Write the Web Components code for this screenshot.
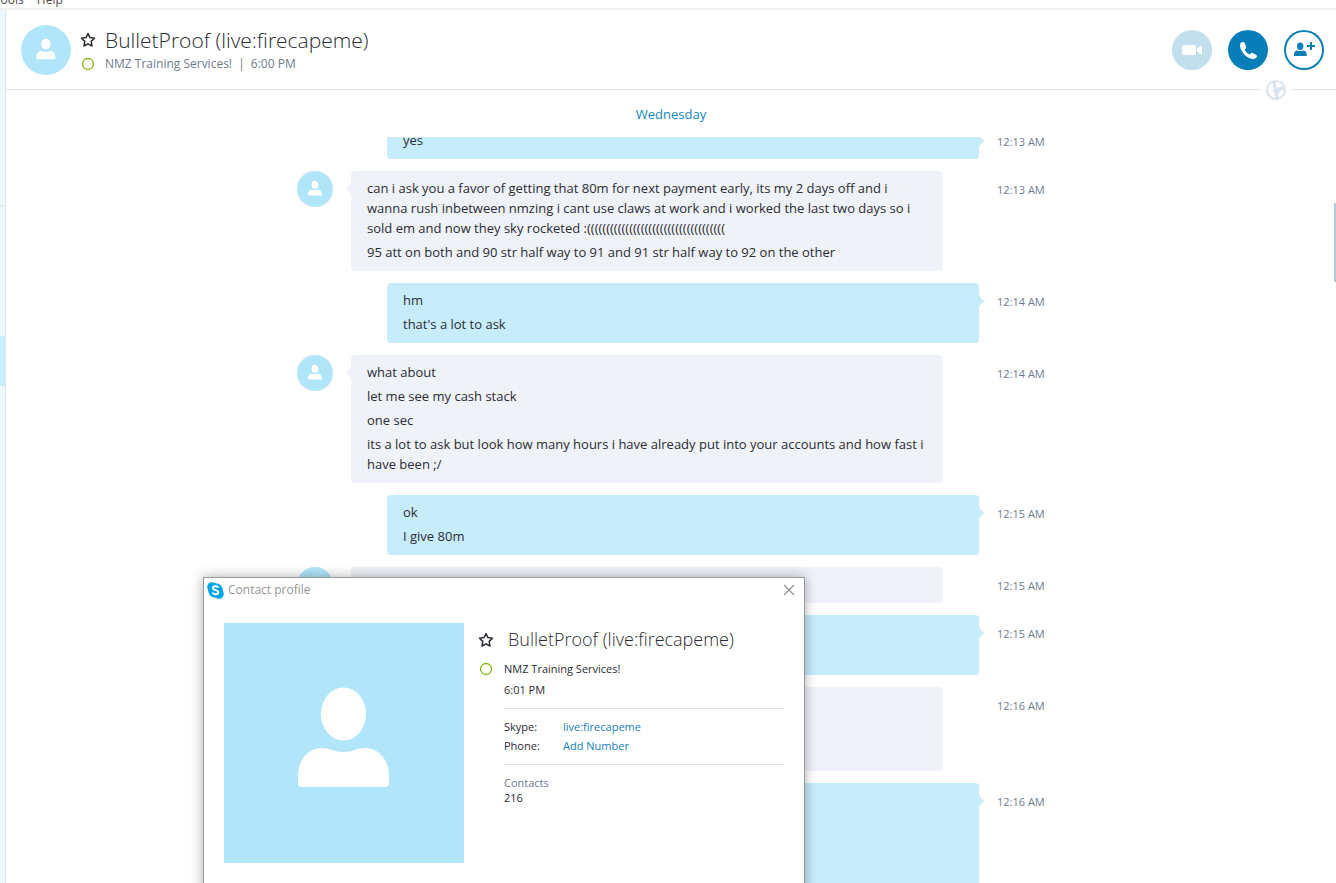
<!DOCTYPE html>
<html lang="en">
<head>
<meta charset="utf-8">
<title>Skype</title>
<style>
  :root {
    --sky: #b1e6fa;
    --sky-soft: #c7ecfc;
    --grey-soft: #eff2f8;
    --line: #dae7f1;
    --brand: #087eb8;
    --text: #2b2c33;
    --muted: #6e7b8c;
    --online: #84bb13;
  }
  body {
    margin: 0;
    height: 100vh;
    overflow: hidden;
    position: relative;
    display: flex;
    flex-direction: column;
    background: #fff;
    color: var(--text);
    font: 13px/20px "Open Sans", "Noto Sans", sans-serif;
  }
  .window { flex: 1; min-height: 0; display: flex; }
  main { flex: 1; min-width: 0; display: flex; flex-direction: column; }
</style>
</head>
<body>
<menu-strip>
  <button>Tools</button>
  <button>Help</button>
</menu-strip>
<div class="window">
  <recent-strip></recent-strip>
  <main>
    <chat-header name="BulletProof (live:firecapeme)" mood="NMZ Training Services!" time="6:00 PM"></chat-header>
    <chat-log day="Wednesday">
      <chat-message time="12:13 AM" mine><p>yes</p></chat-message>
      <chat-message time="12:13 AM">
        <p>can i ask you a favor of getting that 80m for next payment early, its my 2 days off and i wanna rush inbetween nmzing i cant use claws at work and i worked the last two days so i sold em and now they sky rocketed :((((((((((((((((((((((((((((((((((((</p>
        <p>95 att on both and 90 str half way to 91 and 91 str half way to 92 on the other</p>
      </chat-message>
      <chat-message time="12:14 AM" mine><p>hm</p><p>that's a lot to ask</p></chat-message>
      <chat-message time="12:14 AM">
        <p>what about</p>
        <p>let me see my cash stack</p>
        <p>one sec</p>
        <p>its a lot to ask but look how many hours i have already put into your accounts and how fast i have been ;/</p>
      </chat-message>
      <chat-message time="12:15 AM" mine><p>ok</p><p>I give 80m</p></chat-message>
      <chat-message time="12:15 AM"><p></p></chat-message>
      <chat-message time="12:15 AM" mine><p></p><p></p></chat-message>
      <chat-message time="12:16 AM"><p></p><p></p><p></p></chat-message>
      <chat-message time="12:16 AM" mine><p></p><p></p><p></p><p></p><p></p></chat-message>
    </chat-log>
  </main>
</div>
<contact-dialog heading="Contact profile">
  <span slot="name">BulletProof (live:firecapeme)</span>
  <span slot="mood">NMZ Training Services!</span>
  <span slot="time">6:01 PM</span>
  <span slot="contacts">216</span>
</contact-dialog>

<script>
const STAR = `<svg width="16" height="16" viewBox="0 0 16 16" fill="none" stroke="currentColor" stroke-width="1.5" stroke-linejoin="round">
  <path d="M8 1.500l1.900 4.100 4.600.6-3.300 3.200.8 4.600L8 11.800l-4 2.200.8-4.600-3.300-3.200 4.600-.6z"/></svg>`;

const STATUS = `<svg width="14" height="14" viewBox="0 0 14 14" fill="none" stroke="var(--online)" stroke-width="1.3">
  <circle cx="7" cy="7" r="5.5"/></svg>`;

const ICONS = {
  video: `<rect x="10" y="15" width="14" height="10" rx="2"/><path d="M25 18.500l4-2.800q1-.5 1 .5v7.600q0 1-1 .5l-4-2.800z"/>`,
  phone: `<path d="M15.3 12.1c-1.600-.3-3.200 1-3.300 2.900C12.200 22.300 19.300 28.900 25.600 29c1.900 0 3.400-1.400 3.300-3 0-.7-.2-1-.9-1.300l-3.400-1.600c-.8-.4-1.300-.3-1.900.3l-1.200 1.200c-2.200-1-4-2.900-4.900-5l1.100-1.200c.6-.6.7-1.100.4-1.900l-1.500-3.500c-.2-.6-.6-.8-1.300-.9z"/>`,
  add: `<ellipse cx="16.200" cy="16.300" rx="3.200" ry="3.700"/><path d="M10 26v-1.500c0-2.500 1.500-4 3.500-4q2.800 1 5.700 0c2 0 3.500 1.500 3.500 4V26z"/><path d="M26 12h2v3h3v2h-3v3h-2v-3h-3v-2h3z"/>`,
};

/** Base class: opens the shadow root and fills it with the subclass's render(). */
class SkElement extends HTMLElement {
  connectedCallback() {
    if (this.shadowRoot) return;
    this.attachShadow({ mode: 'open' }).innerHTML = this.render();
    this.ready();
  }
  ready() {}
}

/** <menu-strip> — application menu, tucked under the top edge of the window. */
class MenuStrip extends SkElement {
  render() {
    return `
      <style>
        :host {
          display: flex;
          align-items: flex-end;
          gap: 13px;
          height: 8px;
          flex: none;
          overflow: hidden;
          margin-left: -6px;
          border-bottom: 2px solid #f0f0f0;
        }
        ::slotted(button) {
          border: 0;
          padding: 0;
          background: none;
          color: #4b4b4b;
          font: 12px/16px "Open Sans", sans-serif;
        }
      </style>
      <slot></slot>`;
  }
}

/** <recent-strip> — visible edge of the conversation list. */
class RecentStrip extends SkElement {
  render() {
    return `
      <style>
        :host { flex: none; width: 5px; background: #f0f8ff; border-right: 1px solid var(--line); }
        .tabs { height: 195px; border-bottom: 1px solid var(--line); }
        .current { margin-top: 130px; height: 50px; background: var(--sky-soft); }
      </style>
      <div class="tabs"></div>
      <div class="current"></div>`;
  }
}

/** <user-avatar> — round or square placeholder picture, sized by its user. */
class UserAvatar extends SkElement {
  render() {
    return `
      <style>
        :host { display: block; background: var(--sky); border-radius: 50%; overflow: hidden; }
        :host([square]) { border-radius: 0; }
        svg { display: block; width: 100%; }
      </style>
      <svg viewBox="0 0 240 240" fill="#fff">
        <ellipse cx="119.500" cy="91" rx="22.500" ry="26.500"/>
        <path d="M78 164q-4 0-4-4v-7c0-16 10-28 24-28 8 0 12 4 21.500 4s13.500-4 21.500-4c14 0 24 12 24 28v7q0 4-4 4z"/>
      </svg>`;
  }
}

/** <round-button icon label> — call controls in the header. */
class RoundButton extends SkElement {
  render() {
    return `
      <style>
        :host { display: block; }
        button {
          display: block;
          box-sizing: border-box;
          width: 40px;
          height: 40px;
          padding: 0;
          border: 0;
          border-radius: 50%;
          background: var(--brand);
          color: #fff;
          cursor: pointer;
        }
        button:disabled { background: #c1dfec; cursor: default; }
        :host([outline]) button { background: #fff; color: var(--brand); box-shadow: inset 0 0 0 2px var(--brand); }
        svg { display: block; }
      </style>
      <button aria-label="${this.getAttribute('label')}" ${this.hasAttribute('off') ? 'disabled' : ''}>
        <svg width="40" height="40" viewBox="0 0 40 40" fill="currentColor">${ICONS[this.getAttribute('icon')]}</svg>
      </button>`;
  }
}

/** <chat-header> — who the conversation is with, and the call controls. */
class ChatHeader extends SkElement {
  render() {
    return `
      <style>
        :host {
          flex: none;
          display: flex;
          align-items: center;
          box-sizing: border-box;
          height: 80px;
          padding: 0 12px 0 15px;
          border-bottom: 1px solid var(--line);
          position: relative;
        }
        user-avatar { width: 50px; margin-right: 9px; }
        .who { flex: 1; display: grid; grid-template-columns: 16px 1fr; column-gap: 9px; align-items: center; }
        .who > svg, .who button { justify-self: center; }
        .who button { border: 0; padding: 0; background: none; color: inherit; display: flex; }
        h1 { margin: 0; font-size: 21px; line-height: 28px; font-weight: 300; }
        p { margin: 0; font-size: 12px; line-height: 20px; color: var(--muted); }
        .bar { margin: 0 3px; }
        .calls { display: flex; gap: 16px; }
        .globe {
          position: absolute;
          right: 45px;
          bottom: -11px;
          padding: 0 5px;
          background: #fff;
          display: flex;
        }
      </style>
      <user-avatar></user-avatar>
      <div class="who">
        <button aria-label="Add to favourites">${STAR}</button>
        <h1>${this.getAttribute('name')}</h1>
        ${STATUS}
        <p>${this.getAttribute('mood')}<span class="bar"> | </span>${this.getAttribute('time')}</p>
      </div>
      <div class="calls">
        <round-button icon="video" label="Video call" off></round-button>
        <round-button icon="phone" label="Call"></round-button>
        <round-button icon="add" label="Add people" outline></round-button>
      </div>
      <div class="globe">
        <svg width="20" height="20" viewBox="0 0 20 20">
          <circle cx="10" cy="10" r="10" fill="#d8e5ef"/>
          <path fill="#fff" d="M2 8.500Q3 4.500 6 3l1.500 1L6.500 6.500 8 8l-1.500 2.500L8.500 13 9 17.500Q6 17.500 4 15 1.800 12.500 2 8.500zM9.500 2Q14 1.500 16.500 5l1 2-2.500-.5-1.500 1L10.500 7l-.5-2zM14.500 10.500l3.500-.5Q18 15 13 17.500l-1-2 1-2z"/>
        </svg>
      </div>`;
  }
}

/** <chat-log day> — scrolling list of messages under the day heading. */
class ChatLog extends SkElement {
  render() {
    return `
      <style>
        :host { flex: 1; min-height: 0; display: flex; flex-direction: column; position: relative; }
        h2 {
          margin: 0;
          padding: 14px 0 13px;
          text-align: center;
          font-size: 13px;
          line-height: 20px;
          font-weight: 400;
          color: #1487bd;
        }
        .scroll { flex: 1; min-height: 0; overflow-y: auto; scrollbar-width: none; }
        .list { display: flex; flex-direction: column; gap: 12px; max-width: 748px; margin: 0 auto; }
        .thumb { position: absolute; right: 0; top: 113px; width: 2px; height: 79px; background: #b3cadd; }
      </style>
      <h2>${this.getAttribute('day')}</h2>
      <div class="scroll"><div class="list"><slot></slot></div></div>
      <div class="thumb"></div>`;
  }
  ready() {
    this.shadowRoot.querySelector('.scroll').scrollTop = 14;
  }
}

/** <chat-message time [mine]> — one bubble; each slotted <p> is a message in it. */
class ChatMessage extends SkElement {
  render() {
    const mine = this.hasAttribute('mine');
    return `
      <style>
        :host { display: grid; grid-template-columns: 36px 1fr 48px; column-gap: 18px; align-items: start; }
        .bubble {
          grid-column: 2;
          margin-right: 36px;
          padding: 7px 16px 9px;
          display: flex;
          flex-direction: column;
          gap: 4px;
          border-radius: 4px;
          background: var(--grey-soft);
          position: relative;
        }
        :host([mine]) .bubble { margin: 0 0 0 36px; background: var(--sky-soft); }
        .tail { position: absolute; top: 11px; right: 100%; color: var(--grey-soft); }
        :host([mine]) .tail { right: auto; left: 100%; color: var(--sky-soft); transform: scaleX(-1); }
        ::slotted(p) { margin: 0; min-height: 20px; }
        time { grid-column: 3; padding-top: 9px; font-size: 11px; line-height: 20px; color: var(--muted); white-space: nowrap; }
      </style>
      ${mine ? '' : '<user-avatar></user-avatar>'}
      <div class="bubble">
        <svg class="tail" width="5" height="14" viewBox="0 0 5 14" fill="currentColor"><path d="M5 0v14Q4.500 10.500.500 8q-1-1 0-2Q4.500 3.500 5 0z"/></svg>
        <slot></slot>
      </div>
      <time>${this.getAttribute('time')}</time>`;
  }
}

/** <contact-dialog heading> — profile window floating over the chat. */
class ContactDialog extends SkElement {
  render() {
    return `
      <style>
        :host {
          position: absolute;
          left: 203px;
          top: 577px;
          box-sizing: border-box;
          width: 602px;
          height: 340px;
          border: 1px solid #969a9c;
          background: #fff;
          box-shadow: 0 0 12px rgba(0, 0, 0, .32);
        }
        button { border: 0; padding: 0; background: none; color: inherit; display: flex; cursor: pointer; }
        a { color: #1481bb; text-decoration: none; }
        .title { display: flex; align-items: center; gap: 4px; padding: 3px 9px 0 3px; font-size: 12px; line-height: 18px; color: #949494; }
        .title span { flex: 1; }
        .body { display: flex; gap: 14px; padding: 24px 20px 0; }
        user-avatar { flex: none; width: 240px; height: 240px; }
        .card {
          flex: 1;
          display: grid;
          grid-template-columns: 16px 1fr;
          column-gap: 10px;
          align-content: start;
          font-size: 11px;
          line-height: 18px;
        }
        .card > svg, .card > button { justify-self: center; align-self: center; }
        h2 { margin: 0; padding: 3px 4px 5px; font-size: 18px; line-height: 26px; font-weight: 300; }
        .mood { padding: 3px 0; }
        .info { grid-column: 2; }
        dl { display: grid; grid-template-columns: 59px 1fr; row-gap: 1px; margin: 9px 0 10px; padding: 9px 0; border: solid var(--line); border-width: 1px 0; }
        dd { margin: 0; }
        .count { line-height: 15px; }
        .count div { color: var(--muted); }
      </style>
      <div class="title">
        <svg width="17" height="17" viewBox="0 0 17 17">
          <circle cx="5" cy="5" r="4.800" fill="#00a5e8"/><circle cx="12" cy="12" r="4.800" fill="#00a5e8"/><circle cx="8.500" cy="8.500" r="7.300" fill="#00a5e8"/>
          <path d="M11.300 5.700C10.800 4.500 9.800 4.200 8.500 4.200c-1.600 0-2.600.7-2.600 1.900 0 2.700 5.400 1.500 5.400 4.200 0 1.300-1.200 2-2.800 2-1.500 0-2.500-.5-3-1.800" fill="none" stroke="#fff" stroke-width="1.900"/>
        </svg>
        <span>${this.getAttribute('heading')}</span>
        <button aria-label="Close">
          <svg width="12" height="12" viewBox="0 0 12 12" stroke="#8d8d8d" stroke-width="1.100"><path d="M1 1l10 10M11 1L1 11"/></svg>
        </button>
      </div>
      <div class="body">
        <user-avatar square></user-avatar>
        <div class="card">
          <button aria-label="Add to favourites">${STAR}</button>
          <h2><slot name="name"></slot></h2>
          ${STATUS}
          <div class="mood"><slot name="mood"></slot></div>
          <div class="info">
            <slot name="time"></slot>
            <dl>
              <dt>Skype:</dt><dd><a href="#">live:firecapeme</a></dd>
              <dt>Phone:</dt><dd><a href="#">Add Number</a></dd>
            </dl>
            <div class="count"><div>Contacts</div><slot name="contacts"></slot></div>
          </div>
        </div>
      </div>`;
  }
}

customElements.define('user-avatar', UserAvatar);
customElements.define('round-button', RoundButton);
customElements.define('menu-strip', MenuStrip);
customElements.define('recent-strip', RecentStrip);
customElements.define('chat-header', ChatHeader);
customElements.define('chat-message', ChatMessage);
customElements.define('chat-log', ChatLog);
customElements.define('contact-dialog', ContactDialog);
</script>
</body>
</html>
